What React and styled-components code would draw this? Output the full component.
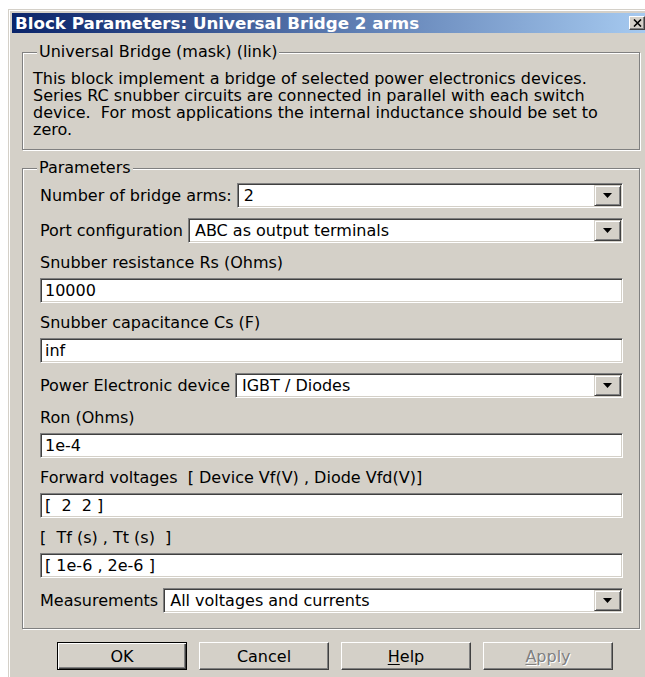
import React from "react";
import styled, { createGlobalStyle, css } from "styled-components";

const GlobalStyle = createGlobalStyle`
  html, body {
    margin: 0;
    padding: 0;
    background: #ffffff;
    overflow: hidden;
  }
  body {
    font-family: "DejaVu Sans", Verdana, sans-serif;
    color: #000;
  }
`;

/* ---- Win classic bevels ---- */
const sunken = css`
  border: 1px solid;
  border-color: #808080 #ffffff #ffffff #808080;
  box-shadow: inset 1px 1px 0 #404040, inset -1px -1px 0 #d4d0c8;
`;

const raised = css`
  border: 1px solid;
  border-color: #ffffff #404040 #404040 #ffffff;
  box-shadow: inset -1px -1px 0 #808080;
`;

const Page = styled.div`
  width: 645px;
  height: 677px;
  box-sizing: border-box;
  padding: 9px 0 0 8px;
  overflow: hidden;
`;

const Window = styled.div`
  width: 643px;
  box-sizing: border-box;
  background: #d4d0c8;
  border: 1px solid #d4d0c8;
  box-shadow: inset 1px 1px 0 #ffffff;
  padding: 3px 3px 40px;
  font-size: 16px;
`;

const TitleBar = styled.div`
  height: 20px;
  display: flex;
  align-items: center;
  justify-content: space-between;
  padding: 0 2px 0 3px;
  background: linear-gradient(to right, #0a246a 0%, #a6caf0 100%);
`;

const Title = styled.span`
  color: #ffffff;
  font-weight: bold;
  font-size: 16.7px;
  line-height: 20px;
  white-space: nowrap;
`;

const CloseButton = styled.span`
  width: 16px;
  height: 14px;
  box-sizing: border-box;
  display: flex;
  align-items: center;
  justify-content: center;
  background: #d4d0c8;
  ${raised};
`;

const Body = styled.div`
  display: flex;
  flex-direction: column;
  padding: 19px 7px 0 10px;
`;

const Frame = styled.section`
  display: flex;
  flex-direction: column;
  border: 1px solid #808080;
  box-shadow: 1px 1px 0 #ffffff, inset 1px 1px 0 #ffffff;
  margin-top: ${(p) => p.$gap || 0}px;
  padding: ${(p) => p.$pad};
`;

const Caption = styled.div`
  align-self: flex-start;
  margin: -11px 0 0 ${(p) => p.$indent}px;
  padding: 0 2px;
  background: #d4d0c8;
  line-height: 20px;
  white-space: nowrap;
`;

const Description = styled.p`
  margin: 8px 0 0;
  line-height: 17px;
  white-space: pre-wrap;
`;

const Fields = styled.div`
  display: flex;
  flex-direction: column;
  gap: 10px;
  margin-top: 5px;
`;

const InlineField = styled.div`
  display: flex;
  align-items: center;
  gap: 5px;
`;

const StackedField = styled.div`
  display: flex;
  flex-direction: column;
  gap: 5px;
`;

const Label = styled.span`
  line-height: 20px;
  white-space: pre;
`;

const TextBox = styled.input`
  height: 25px;
  box-sizing: border-box;
  margin: 0;
  padding: 0 4px;
  font: inherit;
  color: #000;
  background: #ffffff;
  outline: none;
  white-space: pre;
  ${sunken};
`;

const Select = styled.div`
  flex: 1;
  height: 25px;
  box-sizing: border-box;
  display: flex;
  align-items: stretch;
  background: #ffffff;
  padding: 1px 1px 1px 6px;
  ${sunken};
`;

const SelectValue = styled.span`
  flex: 1;
  display: flex;
  align-items: center;
  white-space: pre;
`;

const ArrowButton = styled.span`
  width: 27px;
  box-sizing: border-box;
  display: flex;
  align-items: center;
  justify-content: center;
  background: #d4d0c8;
  border: 1px solid;
  border-color: #d4d0c8 #404040 #404040 #d4d0c8;
  box-shadow: inset 1px 1px 0 #ffffff, inset -1px -1px 0 #808080;
`;

const ButtonRow = styled.div`
  display: flex;
  gap: 12px;
  margin-top: 13px;
  padding-left: 35px;
`;

const Button = styled.button`
  width: 130px;
  height: 28px;
  box-sizing: border-box;
  margin: 0;
  padding: 0;
  font: inherit;
  color: #000;
  background: #d4d0c8;
  ${raised};
  ${(p) =>
    p.$default &&
    css`
      border: 1px solid #000;
      box-shadow: inset 1px 1px 0 #ffffff, inset -1px -1px 0 #404040,
        inset -2px -2px 0 #808080;
    `}
  ${(p) =>
    p.disabled &&
    css`
      color: #808080;
      text-shadow: 1px 1px 0 #ffffff;
    `}
`;

const Mnemonic = styled.u`
  text-decoration-thickness: 1px;
  text-underline-offset: 2px;
`;

const DownArrow = () => (
  <svg width="9" height="5" viewBox="0 0 9 5">
    <polygon points="0,0 9,0 4.5,5" fill="#000" />
  </svg>
);

const CloseGlyph = () => (
  <svg width="9" height="8" viewBox="0 0 9 8">
    <path d="M1 0.5 L8 7.5 M8 0.5 L1 7.5" stroke="#000" strokeWidth="1.6" />
  </svg>
);

const parameters = [
  { kind: "select", label: "Number of bridge arms:", value: "2" },
  { kind: "select", label: "Port configuration", value: "ABC as output terminals" },
  { kind: "text", label: "Snubber resistance Rs (Ohms)", value: "10000" },
  { kind: "text", label: "Snubber capacitance Cs (F)", value: "inf" },
  { kind: "select", label: "Power Electronic device", value: "IGBT / Diodes" },
  { kind: "text", label: "Ron (Ohms)", value: "1e-4" },
  { kind: "text", label: "Forward voltages  [ Device Vf(V) , Diode Vfd(V)]", value: "[  2  2 ]" },
  { kind: "text", label: "[  Tf (s) , Tt (s)  ]", value: "[ 1e-6 , 2e-6 ]" },
  { kind: "select", label: "Measurements", value: "All voltages and currents" },
];

function Parameter({ kind, label, value }) {
  if (kind === "select") {
    return (
      <InlineField>
        <Label>{label}</Label>
        <Select>
          <SelectValue>{value}</SelectValue>
          <ArrowButton>
            <DownArrow />
          </ArrowButton>
        </Select>
      </InlineField>
    );
  }
  return (
    <StackedField>
      <Label>{label}</Label>
      <TextBox type="text" value={value} readOnly />
    </StackedField>
  );
}

export default function App() {
  return (
    <>
      <GlobalStyle />
      <Page>
        <Window>
          <TitleBar>
            <Title>Block Parameters: Universal Bridge 2 arms</Title>
            <CloseButton>
              <CloseGlyph />
            </CloseButton>
          </TitleBar>
          <Body>
            <Frame $pad="0 10px 11px 10px">
              <Caption $indent={4}>Universal Bridge (mask) (link)</Caption>
              <Description>
                {"This block implement a bridge of selected power electronics devices. Series RC snubber circuits are connected in parallel with each switch device.  For most applications the internal inductance should be set to zero."}
              </Description>
            </Frame>
            <Frame $gap={18} $pad="0 16px 15px 17px">
              <Caption $indent={-3}>Parameters</Caption>
              <Fields>
                {parameters.map((p) => (
                  <Parameter key={p.label} {...p} />
                ))}
              </Fields>
            </Frame>
            <ButtonRow>
              <Button $default>OK</Button>
              <Button>Cancel</Button>
              <Button>
                <Mnemonic>H</Mnemonic>elp
              </Button>
              <Button disabled>
                <Mnemonic>A</Mnemonic>pply
              </Button>
            </ButtonRow>
          </Body>
        </Window>
      </Page>
    </>
  );
}
